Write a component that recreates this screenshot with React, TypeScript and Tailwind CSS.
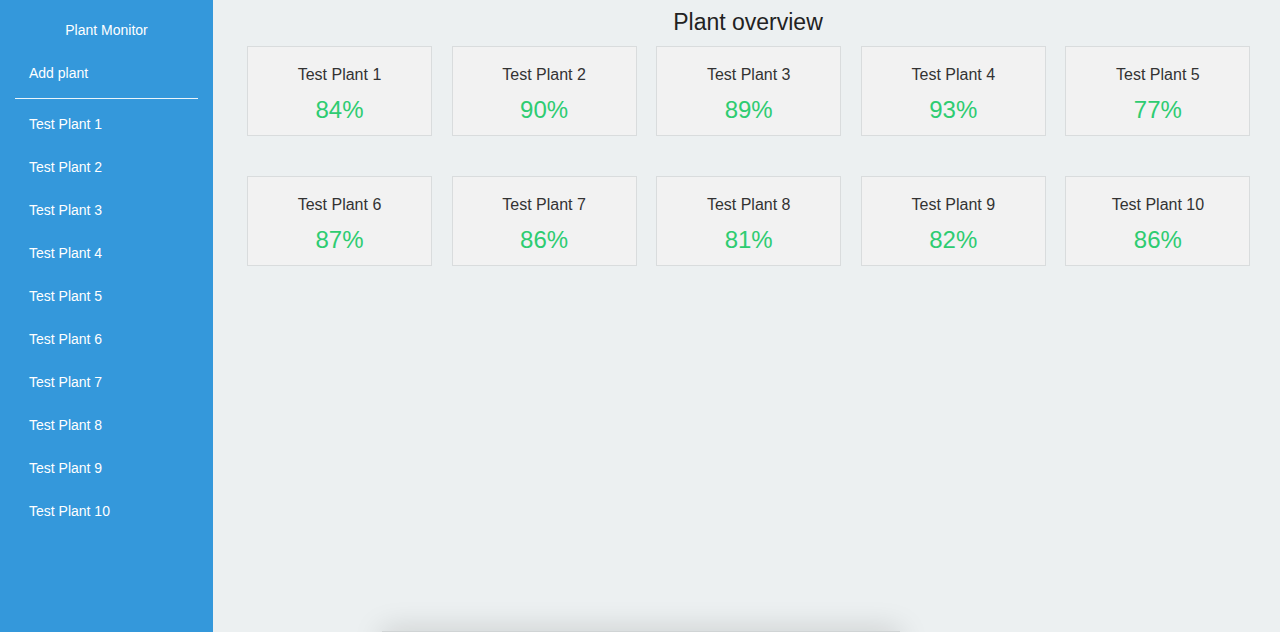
const plants = [
  { name: "Test Plant 1", value: 84 },
  { name: "Test Plant 2", value: 90 },
  { name: "Test Plant 3", value: 89 },
  { name: "Test Plant 4", value: 93 },
  { name: "Test Plant 5", value: 77 },
  { name: "Test Plant 6", value: 87 },
  { name: "Test Plant 7", value: 86 },
  { name: "Test Plant 8", value: 81 },
  { name: "Test Plant 9", value: 82 },
  { name: "Test Plant 10", value: 86 },
];

const Sidebar = () => {
  return (
    <aside className="w-[213px] shrink-0 bg-[#3498db] text-white text-[14px]">
      <div className="h-[60px] flex items-center justify-center">Plant Monitor</div>
      <div className="px-[29px] h-[26px] flex items-center">Add plant</div>
      <div className="mx-[15px] mt-[12px] border-t border-white/90" />
      <ul className="mt-[4px]">
        {plants.map((plant) => (
          <li key={plant.name} className="h-[43px] flex items-center px-[29px]">
            {plant.name}
          </li>
        ))}
      </ul>
    </aside>
  );
};

const PlantCard = ({ name, value }: { name: string; value: number }) => {
  return (
    <div className="w-[185px] h-[90px] bg-[#f2f2f2] border border-[#d9dcdd] flex flex-col items-center pt-[18px]">
      <div className="text-[16px] text-[#333] leading-[20px]">{name}</div>
      <div className="text-[24px] text-[#2ecc71] leading-[30px] mt-[10px]">{value}%</div>
    </div>
  );
};

export default function App() {
  return (
    <div className="relative flex h-[632px] w-[1280px] overflow-hidden bg-[#ecf0f1] font-['Liberation_Sans',Arial,sans-serif]">
      <Sidebar />
      <main className="flex-1">
        <h1 className="text-center text-[23px] text-[#222] leading-[28px] pt-[8px] pl-[3px]">Plant overview</h1>
        <div className="grid grid-cols-5 gap-x-[20px] gap-y-[40px] pl-[34px] pr-[30px] mt-[10px] w-fit">
          {plants.map((plant) => (
            <PlantCard key={plant.name} {...plant} />
          ))}
        </div>
      </main>
      <div className="absolute left-[382px] top-[631px] w-[518px] h-[20px] bg-[#d0d4d5] shadow-[0_0_30px_rgba(0,0,0,0.18)]" />
    </div>
  );
}
